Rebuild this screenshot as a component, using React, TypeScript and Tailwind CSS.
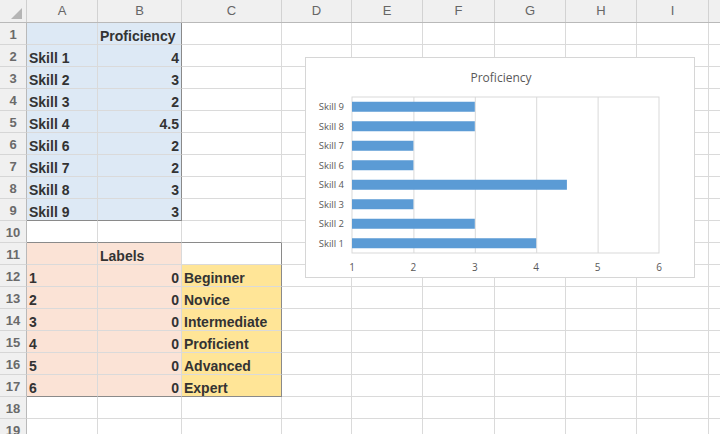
import React from "react";

const COLS = ["A", "B", "C", "D", "E", "F", "G", "H", "I", "J"];
const COL_W = [
  "w-[71px]",
  "w-[84px]",
  "w-[100px]",
  "w-[70px]",
  "w-[71px]",
  "w-[72px]",
  "w-[71px]",
  "w-[71px]",
  "w-[72px]",
  "w-[71px]",
];

type Cell = {
  text?: string;
  align?: "left" | "right";
  bg?: string;
  darkR?: boolean;
  darkB?: boolean;
};

const BLUE = "bg-[#dde9f5]";
const SALMON = "bg-[#fbe3d6]";
const GOLD = "bg-[#ffe597]";

const skills: [string, string][] = [
  ["Skill 1", "4"],
  ["Skill 2", "3"],
  ["Skill 3", "2"],
  ["Skill 4", "4.5"],
  ["Skill 6", "2"],
  ["Skill 7", "2"],
  ["Skill 8", "3"],
  ["Skill 9", "3"],
];

const levels = ["Beginner", "Novice", "Intermediate", "Proficient", "Advanced", "Expert"];

function buildRows(): Cell[][] {
  const rows: Cell[][] = [];
  // row 1
  rows.push([
    { bg: BLUE },
    { text: "Proficiency", bg: BLUE, darkR: true },
  ]);
  skills.forEach(([name, val], i) => {
    const last = i === skills.length - 1;
    rows.push([
      { text: name, bg: BLUE, darkB: last },
      { text: val, align: "right", bg: BLUE, darkR: true, darkB: last },
    ]);
  });
  // row 10
  rows.push([{ darkB: true }, { darkB: true }, { darkB: true }]);
  // row 11
  rows.push([{ bg: SALMON }, { text: "Labels", bg: SALMON }, { darkR: true }]);
  levels.forEach((lv, i) => {
    const last = i === levels.length - 1;
    rows.push([
      { text: String(i + 1), bg: SALMON, darkB: last },
      { text: "0", align: "right", bg: SALMON, darkB: last },
      { text: lv, bg: GOLD, darkR: true, darkB: last },
    ]);
  });
  rows.push([]);
  rows.push([]);
  return rows;
}

function Chart() {
  const left = 46;
  const top = 39;
  const w = 307;
  const h = 156;
  const unit = w / 5;
  const band = h / 8;
  const bars = skills.map(([n, v]) => ({ n, v: parseFloat(v) }));
  return (
    <div className="absolute left-[305px] top-[57px] w-[390px] h-[221px] bg-white border border-[#d6d6d6]">
      <svg width="388" height="219" className="block">
        <text
          x="195"
          y="24"
          textAnchor="middle"
          fontFamily="'Open Sans', 'Liberation Sans', sans-serif"
          fontSize="12"
          fill="#595959"
        >
          Proficiency
        </text>
        <rect x={left} y={top} width={w} height={h} fill="white" stroke="#d9d9d9" strokeWidth="1" />
        {[1, 2, 3, 4].map((i) => (
          <line
            key={i}
            x1={left + i * unit + 0.5}
            x2={left + i * unit + 0.5}
            y1={top}
            y2={top + h}
            stroke="#d9d9d9"
            strokeWidth="1"
          />
        ))}
        {bars.map((b, k) => {
          const cy = top + h - (k + 0.5) * band;
          return (
            <g key={b.n}>
              <rect
                x={left}
                y={cy - 5}
                width={(b.v - 1) * unit}
                height={10}
                fill="#5b9bd5"
              />
              <text
                x={left - 8}
                y={cy + 3.5}
                textAnchor="end"
                fontFamily="'Open Sans', 'Liberation Sans', sans-serif"
                fontSize="9.5"
                fill="#595959"
              >
                {b.n}
              </text>
            </g>
          );
        })}
        {[1, 2, 3, 4, 5, 6].map((v, i) => (
          <text
            key={v}
            x={left + i * unit}
            y={top + h + 18}
            textAnchor="middle"
            fontFamily="'Open Sans', 'Liberation Sans', sans-serif"
            fontSize="10"
            fill="#595959"
          >
            {v}
          </text>
        ))}
      </svg>
    </div>
  );
}

export default function App() {
  const rows = buildRows();
  return (
    <div className="relative w-[720px] h-[434px] overflow-hidden bg-white font-['Liberation_Sans',Arial,sans-serif]">
      {/* column headers */}
      <div className="flex h-[23px] bg-[#f0f0f0] border-b border-[#b9b9b9]">
        <div className="relative w-[27px] shrink-0 border-r border-[#cfcfcf]">
          <div className="absolute right-[4px] bottom-[3px] w-0 h-0 border-l-[11px] border-l-transparent border-b-[11px] border-b-[#b5b5b5]" />
        </div>
        {COLS.map((c, i) => (
          <div
            key={c}
            className={`${COL_W[i]} shrink-0 flex items-center justify-center border-r border-[#d2d2d2] text-[13px] text-[#666]`}
          >
            {c}
          </div>
        ))}
      </div>
      {rows.map((row, r) => (
        <div key={r} className="flex h-[22px]">
          <div className="w-[27px] shrink-0 flex items-center justify-center pt-[2px] bg-[#f0f0f0] border-r border-b border-r-[#b9b9b9] border-b-[#d6d6d6] text-[13px] font-bold text-[#6a6a6a]">
            {r + 1}
          </div>
          {COLS.map((c, i) => {
            const cell: Cell = row[i] ?? {};
            const cls = [
              COL_W[i],
              "shrink-0 flex items-center pt-[5px] px-[2px] border-r border-b whitespace-nowrap overflow-hidden text-[14px] leading-none font-bold text-[#333]",
              cell.bg ?? "bg-white",
              cell.darkR ? "border-r-[#8a8a8a]" : "border-r-[#dadada]",
              cell.darkB ? "border-b-[#8a8a8a]" : "border-b-[#dadada]",
              cell.align === "right" ? "justify-end" : "justify-start",
            ].join(" ");
            return (
              <div key={c} className={cls}>
                {cell.text}
              </div>
            );
          })}
        </div>
      ))}
      <Chart />
    </div>
  );
}
